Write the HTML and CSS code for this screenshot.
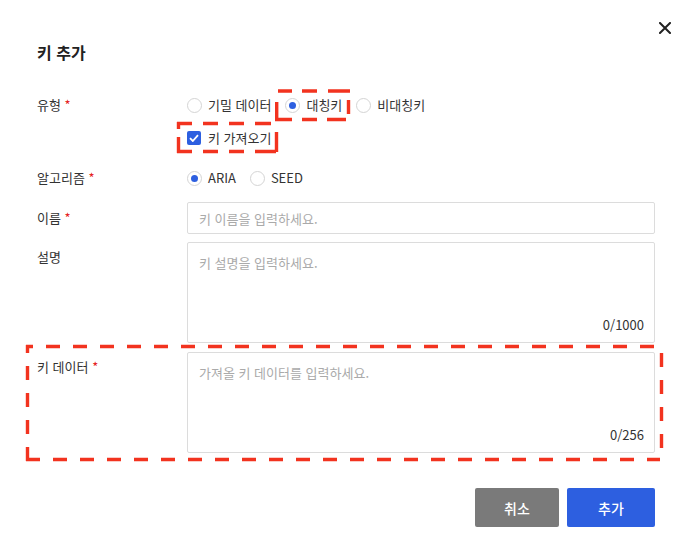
FILE: index.html
```html
<!DOCTYPE html>
<html lang="ko">
<head>
<meta charset="utf-8">
<title>키 추가</title>
<link rel="stylesheet" href="styles.css">
</head>
<body>
<div class="dialog">
  <button class="close" aria-label="닫기">
    <svg width="12" height="12" viewBox="0 0 12 12"><path d="M1 1L11 11M11 1L1 11" stroke="#222" stroke-width="2" stroke-linecap="square"/></svg>
  </button>
  <h1 class="title">키 추가</h1>

  <div class="form">
    <div class="row row-type">
      <div class="label">유형 <span class="req">*</span></div>
      <div class="field">
        <div class="options">
          <label class="opt"><span class="radio"></span>기밀 데이터</label>
          <label class="opt"><span class="radio on"></span>대칭키</label>
          <label class="opt"><span class="radio"></span>비대칭키</label>
        </div>
        <label class="opt check-line"><span class="check"><svg width="10" height="8" viewBox="0 0 10 8"><path d="M1 4.2L3.8 7L9 1.2" fill="none" stroke="#fff" stroke-width="1.8"/></svg></span>키 가져오기</label>
      </div>
    </div>

    <div class="row row-algo">
      <div class="label">알고리즘 <span class="req">*</span></div>
      <div class="options">
        <label class="opt"><span class="radio on"></span>ARIA</label>
        <label class="opt"><span class="radio"></span>SEED</label>
      </div>
    </div>

    <div class="row row-name">
      <div class="label">이름 <span class="req">*</span></div>
      <input class="input" type="text" placeholder="키 이름을 입력하세요.">
    </div>

    <div class="row row-area">
      <div class="label">설명</div>
      <div class="area">
        <textarea placeholder="키 설명을 입력하세요."></textarea>
        <div class="count">0/1000</div>
      </div>
    </div>

    <div class="row row-area row-key">
      <div class="label">키 데이터 <span class="req">*</span></div>
      <div class="area">
        <textarea placeholder="가져올 키 데이터를 입력하세요."></textarea>
        <div class="count">0/256</div>
      </div>
    </div>
  </div>

  <div class="actions">
    <button class="btn btn-cancel">취소</button>
    <button class="btn btn-ok">추가</button>
  </div>

  <svg class="marks" width="692" height="555" viewBox="0 0 692 555">
    <g stroke="#f2331f" stroke-width="3.4" fill="none">
      <path d="M278 91H292M302 91H317M328 91H350M276.7 102V121M275 119.5H292M302 119.5H317M327 119.5H346M348.5 100V114"/>

      <path d="M177 123.5H192M203 123.5H218M229 123.5H244M255 123.5H271M178.5 122V129M178.5 137V153M177 151.5H192M203 151.5H218M229 151.5H244M255 151.5H276M276.5 132V152"/>
    </g>
    <g stroke="#f2331f" stroke-width="3.4" fill="none" stroke-dasharray="14 13">
      <path d="M26 346.5H657" stroke-dashoffset="7"/>
      <path d="M27.5 345V461" stroke-dashoffset="6"/>
      <path d="M26 459.5H660"/>
      <path d="M661.5 353V450"/>
    </g>
  </svg>
</div>
</body>
</html>
```
FILE: styles.css
```css
* { box-sizing: border-box; }
html, body { margin: 0; padding: 0; background: #fff; }
body {
  font-family: "Noto Sans CJK KR", "Noto Sans", sans-serif;
  font-size: 13px;
  color: #333;
}
.dialog {
  position: relative;
  width: 692px;
  height: 555px;
  padding: 42px 37px 0 37px;
}
.close {
  position: absolute;
  top: 22px;
  right: 21px;
  width: 12px;
  height: 12px;
  padding: 0;
  border: 0;
  background: none;
  display: block;
}
.close svg { display: block; }
.title {
  margin: 0;
  font-size: 16px;
  font-weight: 700;
  line-height: 20px;
  color: #222;
}
.form {
  margin-top: 33px;
  display: flex;
  flex-direction: column;
}
.row {
  display: grid;
  grid-template-columns: 150px 468px;
}
.label {
  line-height: 20px;
  color: #333;
}
.req { color: #e5231d; }
.field { display: flex; flex-direction: column; gap: 13px; }
.options { display: flex; align-items: center; }
.opt {
  display: flex;
  align-items: center;
  line-height: 20px;
  margin-right: 14px;
  color: #333;
}
.radio {
  width: 15px;
  height: 15px;
  border: 1px solid #d4d4d4;
  border-radius: 50%;
  margin-right: 6px;
  display: flex;
  align-items: center;
  justify-content: center;
  background: #fff;
}
.radio.on::after {
  content: "";
  width: 7px;
  height: 7px;
  border-radius: 50%;
  background: #2d5fe0;
}
.check {
  width: 14px;
  height: 14px;
  border-radius: 2px;
  background: #2d5fe0;
  margin-right: 7px;
  display: flex;
  align-items: center;
  justify-content: center;
}
.check svg { display: block; }
.row-algo { margin-top: 20px; }
.row-name { margin-top: 14px; align-items: center; }
.input {
  height: 32px;
  border: 1px solid #dcdcdc;
  border-radius: 2px;
  padding: 0 11px;
  font: inherit;
  color: #333;
  outline: none;
}
.input::placeholder, textarea::placeholder { color: #aaa; }
.row-area { margin-top: 8px; }
.row-key { margin-top: 9px; }
.row-area .label { padding-top: 5px; }
.area {
  height: 101px;
  border: 1px solid #dcdcdc;
  border-radius: 2px;
  display: flex;
  flex-direction: column;
  padding: 10px 10px 7px 11px;
}
.area textarea {
  flex: 1;
  border: 0;
  padding: 0;
  margin: 0;
  resize: none;
  font: inherit;
  line-height: 20px;
  color: #333;
  outline: none;
}
.count {
  text-align: right;
  line-height: 20px;
  color: #333;
}
.actions {
  margin-top: 35px;
  display: flex;
  justify-content: flex-end;
  gap: 8px;
}
.btn {
  height: 39px;
  border: 0;
  border-radius: 2px;
  color: #fff;
  font-family: inherit;
  font-size: 14px;
  font-weight: 500;
}
.btn-cancel { width: 84px; background: #7a7a7a; }
.btn-ok { width: 88px; background: #2d5fe0; }
.marks {
  position: absolute;
  left: 0;
  top: 0;
  pointer-events: none;
}
```
